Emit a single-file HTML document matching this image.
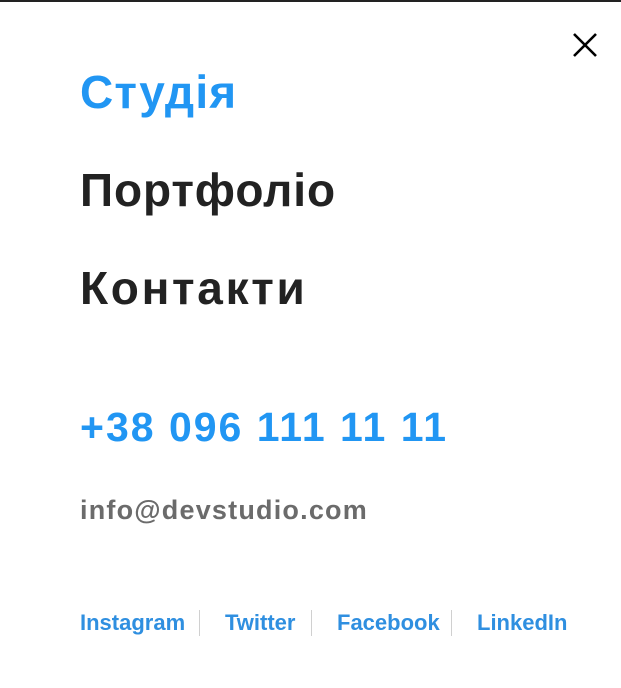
<!DOCTYPE html>
<html><head><meta charset="utf-8"><style>
html,body{margin:0;padding:0;background:#fff;width:621px;height:688px;overflow:hidden;font-family:"Liberation Sans",sans-serif}
.top{position:absolute;left:0;top:0;width:621px;height:2px;background:#222}
.t{position:absolute;left:80px;white-space:nowrap;font-weight:bold;line-height:1}
.close{position:absolute;left:572px;top:32px;width:26px;height:26px}
.s{position:absolute;top:610px;font-size:22px;color:#2f8fe0;font-weight:bold;line-height:26px;white-space:nowrap}
.sep{position:absolute;top:610px;width:1px;height:26px;background:#d0d0d0}
</style></head><body>
<div class="top"></div>
<svg class="close" viewBox="0 0 26 26"><path d="M2 2L24 24M24 2L2 24" stroke="#000" stroke-width="2.6"/></svg>
<div class="t" style="top:69px;font-size:46px;color:#2196f3;letter-spacing:1.2px">Студія</div>
<div class="t" style="top:167px;font-size:46px;color:#222;letter-spacing:0.9px">Портфоліо</div>
<div class="t" style="top:265px;font-size:46px;color:#222;letter-spacing:2.7px">Контакти</div>
<div class="t" style="top:407px;font-size:41px;color:#2196f3;letter-spacing:2px">+38 096 111 11 11</div>
<div class="t" style="top:497px;font-size:27px;color:#6b6b6b;letter-spacing:1.2px">info@devstudio.com</div>
<div class="s" style="left:80px">Instagram</div><div class="sep" style="left:199px"></div>
<div class="s" style="left:225px">Twitter</div><div class="sep" style="left:311px"></div>
<div class="s" style="left:337px">Facebook</div><div class="sep" style="left:451px"></div>
<div class="s" style="left:477px">LinkedIn</div>
</body></html>
